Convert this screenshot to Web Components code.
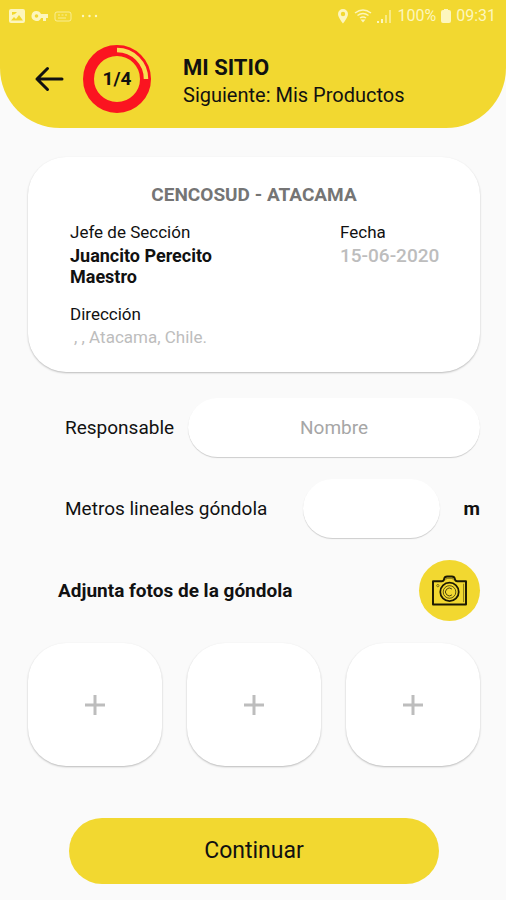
<!DOCTYPE html>
<html lang="es">
<head>
    <meta charset="UTF-8">
    <meta name="viewport" content="width=device-width, initial-scale=1.0">
    <title>Mi sitio</title>
    <style>
        body {
            --brand: #f2d830;
            --muted: #bdbdbd;
            --shadow: 0 1px 2px rgba(0, 0, 0, .26);
            margin: 0;
            background-color: #fafafa;
            color: #111;
            font: 18px/22px Roboto, "Liberation Sans", sans-serif;
        }
    </style>
</head>
<body>
    <site-page>
        <page-header slot="header" step="1" total="4">
            <status-bar slot="status" battery="100%" time="09:31"></status-bar>
            <span slot="title">MI SITIO</span>
            <span slot="next">Siguiente: Mis Productos</span>
        </page-header>
        <site-card>
            <span slot="title">CENCOSUD - ATACAMA</span>
            <span slot="manager">Juancito Perecito Maestro</span>
            <span slot="date">15-06-2020</span>
            <span slot="address">, , Atacama, Chile.</span>
        </site-card>
        <form-field label="Responsable" placeholder="Nombre"></form-field>
        <form-field class="short" label="Metros lineales góndola" unit="m"></form-field>
        <photo-picker count="3">Adjunta fotos de la góndola</photo-picker>
        <main-button>Continuar</main-button>
    </site-page>

    <script>
        class SitePage extends HTMLElement {
            constructor() {
                super();
                this.attachShadow({mode: 'open'}).innerHTML = `
                    <style>
                        :host {
                            display: block;
                        }

                        main {
                            display: flex;
                            flex-direction: column;
                            gap: 22px;
                            padding: 29px 26px 16px 28px;
                        }
                    </style>
                    <slot name="header"></slot>
                    <main><slot></slot></main>
                `;
            }
        }

        class StatusBar extends HTMLElement {
            constructor() {
                super();
                this.attachShadow({mode: 'open'}).innerHTML = `
                    <style>
                        :host {
                            display: flex;
                            justify-content: space-between;
                            align-items: center;
                            height: 32px;
                            padding: 0 10px 0 8px;
                            color: #fdf6bd;
                            font-size: 16px;
                            line-height: 20px;
                        }

                        div {
                            display: flex;
                            align-items: center;
                            gap: 5px;
                        }

                        svg {
                            display: block;
                            fill: currentColor;
                        }
                    </style>
                    <div>
                        <svg width="18" height="16" viewBox="0 0 18 16"><path fill-rule="evenodd" d="M3 1h12q2 0 2 2v10q0 2-2 2H3q-2 0-2-2V3q0-2 2-2zM3 12.500h12L11 7l-3 4-2-2zM4 4v3l3-1 2-2z"/></svg>
                        <svg width="18" height="16" viewBox="0 0 18 16"><path fill-rule="evenodd" d="M5.500 3a5 5 0 1 0 4.600 7H12v3h3v-3h2V6h-7A5 5 0 0 0 5.500 3zm0 3.200a1.800 1.800 0 1 1 0 3.600 1.800 1.800 0 0 1 0-3.600z"/></svg>
                        <svg width="18" height="16" viewBox="0 0 18 16"><path d="M3 4h12q2 0 2 2v5q0 2-2 2H3q-2 0-2-2V6q0-2 2-2zM4 7h2m1.500 0h2m1.500 0h2M4 10h8" fill="none" stroke="currentColor" stroke-opacity=".7"/></svg>
                        <svg width="24" height="16" viewBox="0 0 24 16"><circle cx="6" cy="8" r="1.200"/><circle cx="12.500" cy="8" r="1.200"/><circle cx="19" cy="8" r="1.200"/></svg>
                    </div>
                    <div>
                        <svg width="12" height="16" viewBox="0 0 12 16"><path fill-rule="evenodd" d="M6 1a5 5 0 0 0-5 5c0 3.500 5 9.500 5 9.500S11 9.500 11 6a5 5 0 0 0-5-5zm0 2.800a2.200 2.200 0 1 1 0 4.400 2.200 2.200 0 0 1 0-4.400z"/></svg>
                        <svg width="18" height="16" viewBox="0 0 18 16"><path d="M1 5q8-6 16 0M3.500 7.500q5.500-4 11 0M6 10q3-2.200 6 0" fill="none" stroke="currentColor" stroke-width="1.500"/><path d="M9 14.500L6.500 11.500h5z"/></svg>
                        <svg width="15" height="16" viewBox="0 0 15 16"><path d="M0 13h2v2H0zM4 11h2v4H4z"/><path opacity=".6" d="M8 7h2v8H8zM12 2h2v13h-2z"/></svg>
                        <span id="battery"></span>
                        <svg width="10" height="16" viewBox="0 0 10 16"><path d="M3 1h4v1h1q2 0 2 2v9q0 2-2 2H2q-2 0-2-2V4q0-2 2-2h1z"/></svg>
                        <span id="time"></span>
                    </div>
                `;
            }

            connectedCallback() {
                this.shadowRoot.querySelector('#battery').textContent = this.getAttribute('battery');
                this.shadowRoot.querySelector('#time').textContent = this.getAttribute('time');
            }
        }

        class PageHeader extends HTMLElement {
            constructor() {
                super();
                this.attachShadow({mode: 'open'}).innerHTML = `
                    <style>
                        header {
                            padding-bottom: 15px;
                            border-radius: 0 0 60px 60px;
                            background-color: var(--brand);
                        }

                        :host {
                            display: block;
                        }

                        .row {
                            display: flex;
                            align-items: center;
                            padding: 13px 32px 0;
                        }

                        button {
                            padding: 0;
                            border: 0;
                            background: none;
                            color: inherit;
                        }

                        svg {
                            display: block;
                        }

                        step-ring {
                            margin: 0 32px 0 19px;
                        }

                        .text {
                            padding-top: 6px;
                        }

                        h1 {
                            margin: 0;
                            font-size: 22px;
                            line-height: 26px;
                            font-weight: 700;
                        }

                        p {
                            margin: 0;
                            font-size: 20px;
                            line-height: 28px;
                        }
                    </style>
                    <header>
                        <slot name="status"></slot>
                        <div class="row">
                            <button type="button" aria-label="Volver">
                                <svg width="32" height="32" viewBox="0 0 32 32" fill="none" stroke="#111" stroke-width="3" stroke-linecap="round" stroke-linejoin="round"><path d="M30 16H5M15.500 5.500L5 16l10.500 10.500"/></svg>
                            </button>
                            <step-ring></step-ring>
                            <div class="text">
                                <h1><slot name="title"></slot></h1>
                                <p><slot name="next"></slot></p>
                            </div>
                        </div>
                    </header>
                `;
            }

            connectedCallback() {
                const ring = this.shadowRoot.querySelector('step-ring');
                ring.setAttribute('step', this.getAttribute('step'));
                ring.setAttribute('total', this.getAttribute('total'));
            }
        }

        class StepRing extends HTMLElement {
            static get observedAttributes() {
                return ['step', 'total'];
            }

            constructor() {
                super();
                this.attachShadow({mode: 'open'}).innerHTML = `
                    <style>
                        :host {
                            display: grid;
                            place-items: center;
                            font-size: 19px;
                            font-weight: 700;
                        }

                        svg, span {
                            grid-area: 1 / 1;
                        }

                        circle {
                            fill: none;
                        }
                    </style>
                    <svg width="68" height="68" viewBox="0 0 68 68">
                        <circle cx="34" cy="34" r="28.500" stroke="#fb1420" stroke-width="11"/>
                        <circle id="done" cx="34" cy="34" r="29" stroke="#f8dd50" stroke-width="4.500" pathLength="100" transform="rotate(-90 34 34)"/>
                    </svg>
                    <span></span>
                `;
            }

            attributeChangedCallback() {
                const step = this.getAttribute('step');
                const total = this.getAttribute('total') || 1;
                this.shadowRoot.querySelector('span').textContent = step + '/' + total;
                this.shadowRoot.querySelector('#done').setAttribute('stroke-dasharray', step / total * 100 + ' 100');
            }
        }

        class SiteCard extends HTMLElement {
            constructor() {
                super();
                this.attachShadow({mode: 'open'}).innerHTML = `
                    <style>
                        :host {
                            display: block;
                            margin-bottom: 4px;
                            padding: 26px 42px 24px;
                            border-radius: 38px;
                            background-color: #fff;
                            box-shadow: var(--shadow);
                            font-size: 17px;
                            line-height: 21px;
                        }

                        h2 {
                            margin: 0 0 15px;
                            color: #757575;
                            font-size: 19px;
                            line-height: 24px;
                            font-weight: 700;
                            text-align: center;
                        }

                        dl {
                            display: grid;
                            grid-template-columns: 1fr 98px;
                            column-gap: 100px;
                            row-gap: 17px;
                            margin: 0;
                        }

                        dt {
                            margin-bottom: 2px;
                        }

                        dd {
                            margin: 0;
                            font-size: 18px;
                            font-weight: 700;
                        }

                        .date {
                            color: var(--muted);
                            font-size: 19px;
                            font-weight: 500;
                            white-space: nowrap;
                        }

                        .address {
                            padding-left: 4px;
                            color: var(--muted);
                            font-size: 17px;
                            font-weight: 400;
                        }
                    </style>
                    <h2><slot name="title"></slot></h2>
                    <dl>
                        <div>
                            <dt>Jefe de Sección</dt>
                            <dd><slot name="manager"></slot></dd>
                        </div>
                        <div>
                            <dt>Fecha</dt>
                            <dd class="date"><slot name="date"></slot></dd>
                        </div>
                        <div>
                            <dt>Dirección</dt>
                            <dd class="address"><slot name="address"></slot></dd>
                        </div>
                    </dl>
                `;
            }
        }

        class FormField extends HTMLElement {
            constructor() {
                super();
                this.attachShadow({mode: 'open'}).innerHTML = `
                    <style>
                        :host {
                            display: flex;
                            align-items: center;
                            padding-left: 37px;
                            font-size: 19px;
                        }

                        label {
                            flex: none;
                            margin-right: 14px;
                        }

                        input {
                            flex: 1;
                            box-sizing: border-box;
                            min-width: 0;
                            height: 59px;
                            padding: 0 24px;
                            border: 0;
                            border-radius: 30px;
                            background-color: #fff;
                            box-shadow: 0 1px 1px rgba(0, 0, 0, .18);
                            font: inherit;
                            text-align: center;
                        }

                        input::placeholder {
                            color: #a6a6a6;
                        }

                        span {
                            flex: none;
                            margin-left: 24px;
                            font-weight: 700;
                        }

                        span:empty {
                            display: none;
                        }

                        :host(.short) label {
                            margin-right: 36px;
                        }
                    </style>
                    <label for="field"></label>
                    <input id="field" type="text">
                    <span></span>
                `;
            }

            connectedCallback() {
                this.shadowRoot.querySelector('label').textContent = this.getAttribute('label');
                this.shadowRoot.querySelector('input').placeholder = this.getAttribute('placeholder') || '';
                this.shadowRoot.querySelector('span').textContent = this.getAttribute('unit') || '';
            }
        }

        class PhotoPicker extends HTMLElement {
            constructor() {
                super();
                this.attachShadow({mode: 'open'}).innerHTML = `
                    <style>
                        :host {
                            display: block;
                        }

                        .top {
                            display: flex;
                            justify-content: space-between;
                            align-items: center;
                            margin-bottom: 22px;
                            padding-left: 30px;
                        }

                        h2 {
                            margin: 0;
                            font-size: 19px;
                            line-height: 24px;
                            font-weight: 700;
                        }

                        button {
                            display: grid;
                            place-items: center;
                            padding: 0;
                            border: 0;
                        }

                        .camera {
                            width: 61px;
                            height: 61px;
                            border-radius: 50%;
                            background-color: var(--brand);
                        }

                        .tiles {
                            display: grid;
                            grid-auto-flow: column;
                            grid-auto-columns: 1fr;
                            gap: 25px;
                        }

                        .tiles button {
                            height: 123px;
                            border-radius: 38px;
                            background-color: #fff;
                            box-shadow: var(--shadow);
                        }
                    </style>
                    <div class="top">
                        <h2><slot></slot></h2>
                        <button class="camera" type="button" aria-label="Tomar foto">
                            <svg width="37" height="33" viewBox="0 0 38 34" fill="none" stroke="#1c1903" stroke-width="2" stroke-linejoin="round">
                                <path d="M2 7.500h9q2 0 2.500-2.500t3-2.500h5q2.500 0 3 2.500T27 7.500h9v24H2z"/>
                                <path d="M14.500 6.500q1-1 1.500-2h6q.500 1 1.500 2M33.500 10v19" stroke-width="1" opacity=".5"/>
                                <circle cx="19" cy="18.500" r="9.500" stroke-width="1.800"/>
                                <circle cx="19" cy="18.500" r="6.500" stroke-width="1" opacity=".7"/>
                                <path d="M21.500 15.500a4 4 0 1 0 0 6" stroke-width="1" opacity=".8"/>
                                <circle cx="7" cy="12" r="1.200" stroke-width="1" opacity=".5"/>
                            </svg>
                        </button>
                    </div>
                    <div class="tiles"></div>
                `;
            }

            connectedCallback() {
                const tile = `
                    <button type="button" aria-label="Agregar foto">
                        <svg width="20" height="20" viewBox="0 0 20 20" stroke="#bdbdbd" stroke-width="3"><path d="M10 0v20M0 10h20"/></svg>
                    </button>
                `;
                this.shadowRoot.querySelector('.tiles').innerHTML = tile.repeat(this.getAttribute('count') || 1);
            }
        }

        class MainButton extends HTMLElement {
            constructor() {
                super();
                this.attachShadow({mode: 'open'}).innerHTML = `
                    <style>
                        :host {
                            display: block;
                            margin: 30px 41px 0;
                        }

                        button {
                            width: 100%;
                            height: 66px;
                            border: 0;
                            border-radius: 33px;
                            background-color: var(--brand);
                            color: inherit;
                            font: inherit;
                            font-size: 23px;
                        }
                    </style>
                    <button type="button"><slot></slot></button>
                `;
            }
        }

        customElements.define('site-page', SitePage);
        customElements.define('status-bar', StatusBar);
        customElements.define('step-ring', StepRing);
        customElements.define('page-header', PageHeader);
        customElements.define('site-card', SiteCard);
        customElements.define('form-field', FormField);
        customElements.define('photo-picker', PhotoPicker);
        customElements.define('main-button', MainButton);
    </script>
</body>
</html>
